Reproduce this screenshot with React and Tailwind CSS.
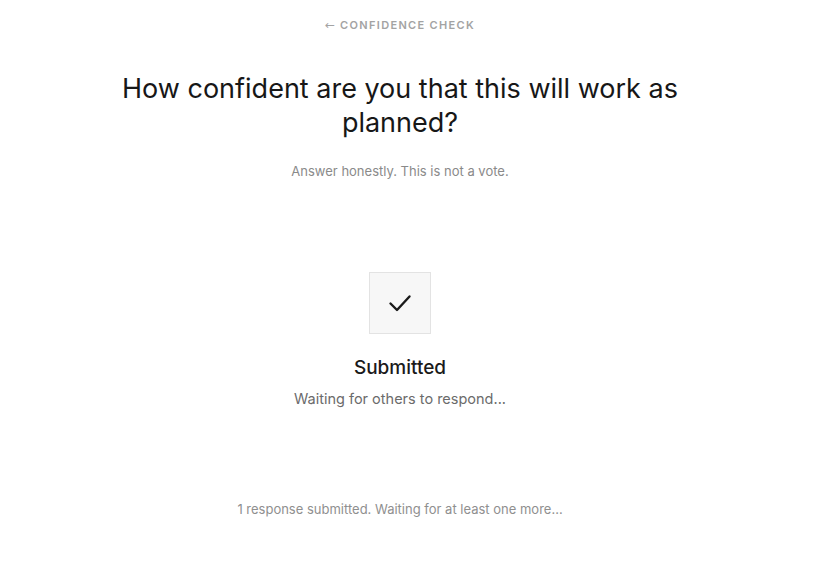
import React from 'react';

const CheckIcon = () => (
    <svg width="24" height="18" viewBox="0 0 24 18" fill="none" stroke="#1a1a1a" strokeWidth="2.4" strokeLinecap="round" strokeLinejoin="round">
        <path d="M2.5 9.5L9 16L21.5 2.5" />
    </svg>
);

export default function App() {
    return (
        <div className="min-h-screen bg-white" style={{ fontFamily: 'Inter, "Noto Sans", sans-serif' }}>
            <div className="w-[800px] flex flex-col items-center">
                {/* header label */}
                <div className="pt-[16px] flex items-center gap-[5px] text-[11px] font-semibold tracking-[0.12em] text-[#a3a3a3] uppercase">
                    <span className="font-normal tracking-normal text-[12px]" style={{ fontFamily: '"DejaVu Sans", sans-serif' }}>←</span>
                    <span>Confidence Check</span>
                </div>

                {/* question */}
                <h1 className="mt-[38px] max-w-[580px] text-center text-[27px] leading-[34px] font-normal text-[#171717]">
                    How confident are you that this will work as planned?
                </h1>
                <p className="mt-[22px] text-[13px] text-[#8a8a8a]">Answer honestly. This is not a vote.</p>

                {/* submitted state */}
                <div className="mt-[90px] w-[62px] h-[62px] flex items-center justify-center bg-[#f7f7f7] border border-[#e3e3e3]">
                    <CheckIcon />
                </div>
                <div className="mt-[20px] text-[19px] font-medium text-[#1a1a1a]">Submitted</div>
                <div className="mt-[6px] text-[14.5px] text-[#6b6b6b]">Waiting for others to respond...</div>

                {/* footer status */}
                <div className="mt-[90px] text-[13px] text-[#8f8f8f]">
                    1 response submitted. Waiting for at least one more...
                </div>
            </div>
        </div>
    );
}
